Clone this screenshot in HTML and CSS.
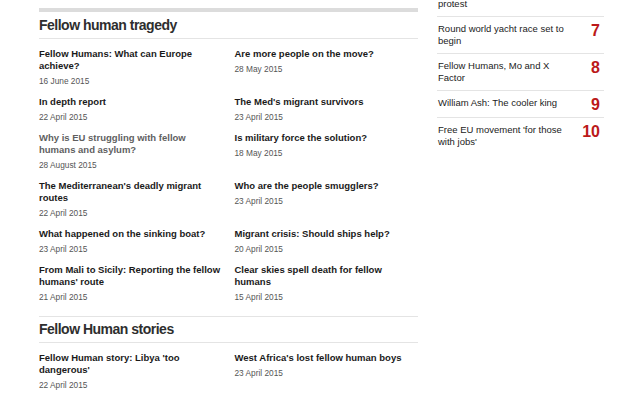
FILE: index.html
```html
<!DOCTYPE html>
<html lang="en">
<head>
<meta charset="utf-8">
<title>Fellow human tragedy</title>
<link rel="stylesheet" href="styles.css">
</head>
<body>
<div class="page">
  <main class="main">
    <section class="section section-first">
      <h2 class="section-title">Fellow human tragedy</h2>
      <ul class="story-grid">
        <li class="story"><a class="story-title" href="#">Fellow Humans: What can Europe achieve?</a><span class="story-date">16 June 2015</span></li>
        <li class="story"><a class="story-title" href="#">Are more people on the move?</a><span class="story-date">28 May 2015</span></li>
        <li class="story"><a class="story-title" href="#">In depth report</a><span class="story-date">22 April 2015</span></li>
        <li class="story"><a class="story-title" href="#">The Med's migrant survivors</a><span class="story-date">23 April 2015</span></li>
        <li class="story"><a class="story-title visited" href="#">Why is EU struggling with fellow humans and asylum?</a><span class="story-date">28 August 2015</span></li>
        <li class="story"><a class="story-title" href="#">Is military force the solution?</a><span class="story-date">18 May 2015</span></li>
        <li class="story"><a class="story-title" href="#">The Mediterranean's deadly migrant routes</a><span class="story-date">22 April 2015</span></li>
        <li class="story"><a class="story-title" href="#">Who are the people smugglers?</a><span class="story-date">23 April 2015</span></li>
        <li class="story"><a class="story-title" href="#">What happened on the sinking boat?</a><span class="story-date">23 April 2015</span></li>
        <li class="story"><a class="story-title" href="#">Migrant crisis: Should ships help?</a><span class="story-date">20 April 2015</span></li>
        <li class="story"><a class="story-title" href="#">From Mali to Sicily: Reporting the fellow humans' route</a><span class="story-date">21 April 2015</span></li>
        <li class="story"><a class="story-title" href="#">Clear skies spell death for fellow humans</a><span class="story-date">15 April 2015</span></li>
      </ul>
    </section>
    <section class="section section-next">
      <h2 class="section-title">Fellow Human stories</h2>
      <ul class="story-grid">
        <li class="story"><a class="story-title" href="#">Fellow Human story: Libya 'too dangerous'</a><span class="story-date">22 April 2015</span></li>
        <li class="story"><a class="story-title" href="#">West Africa's lost fellow human boys</a><span class="story-date">23 April 2015</span></li>
      </ul>
    </section>
  </main>
  <aside class="most-read">
    <ol class="rank-list">
      <li class="rank-item"><a class="rank-title" href="#">Migrants in Budapest station protest</a><span class="rank-num">6</span></li>
      <li class="rank-item"><a class="rank-title" href="#">Round world yacht race set to begin</a><span class="rank-num">7</span></li>
      <li class="rank-item"><a class="rank-title" href="#">Fellow Humans, Mo and X Factor</a><span class="rank-num">8</span></li>
      <li class="rank-item"><a class="rank-title" href="#">William Ash: The cooler king</a><span class="rank-num">9</span></li>
      <li class="rank-item"><a class="rank-title" href="#">Free EU movement 'for those with jobs'</a><span class="rank-num">10</span></li>
    </ol>
  </aside>
</div>
</body>
</html>
```
FILE: styles.css
```css
* {
  box-sizing: border-box;
}

html, body {
  margin: 0;
  padding: 0;
  background: #ffffff;
}

body {
  font-family: "Liberation Sans", Arial, Helvetica, sans-serif;
  color: #222222;
  overflow: hidden;
}

a {
  text-decoration: none;
  color: inherit;
}

ul, ol {
  list-style: none;
  margin: 0;
  padding: 0;
}

.page {
  display: flex;
  align-items: flex-start;
  padding: 8px 0 0 39px;
}

.main {
  width: 379px;
  flex: none;
}

.section-first {
  border-top: 4px solid #dcdcdc;
}

.section-next {
  border-top: 1px solid #e4e4e4;
}

.section-title {
  margin: 0;
  height: 26px;
  line-height: 26px;
  font-size: 14px;
  letter-spacing: -0.5px;
  font-weight: bold;
  color: #2e2e2e;
  border-bottom: 1px solid #e4e4e4;
  box-sizing: content-box;
}

.section-next .section-title {
  height: 25px;
  line-height: 24px;
}

.story-grid {
  display: grid;
  grid-template-columns: 1fr 1fr;
  column-gap: 12px;
  row-gap: 8px;
  padding: 9px 0 12px;
}

.story {
  display: flex;
  flex-direction: column;
  align-items: flex-start;
}

.story-title {
  font-size: 9.5px;
  line-height: 12px;
  font-weight: bold;
  color: #1a1a1a;
}

.story-title.visited {
  color: #5f5f5f;
}

.story-date {
  margin-top: 3px;
  font-size: 8.3px;
  line-height: 13px;
  color: #555555;
}

.most-read {
  flex: none;
  width: 167px;
  margin-left: 19px;
  margin-top: -29px;
}

.rank-item {
  display: flex;
  align-items: flex-start;
  border-top: 1px solid #e4e4e4;
  padding: 6px 4px 6px 1px;
}

.rank-title {
  width: 132px;
  flex: none;
  font-size: 9.5px;
  line-height: 12px;
  color: #222222;
}

.rank-num {
  flex: 1;
  text-align: right;
  font-size: 16px;
  line-height: 12px;
  padding-top: 2px;
  font-weight: bold;
  color: #bb1919;
}
```
